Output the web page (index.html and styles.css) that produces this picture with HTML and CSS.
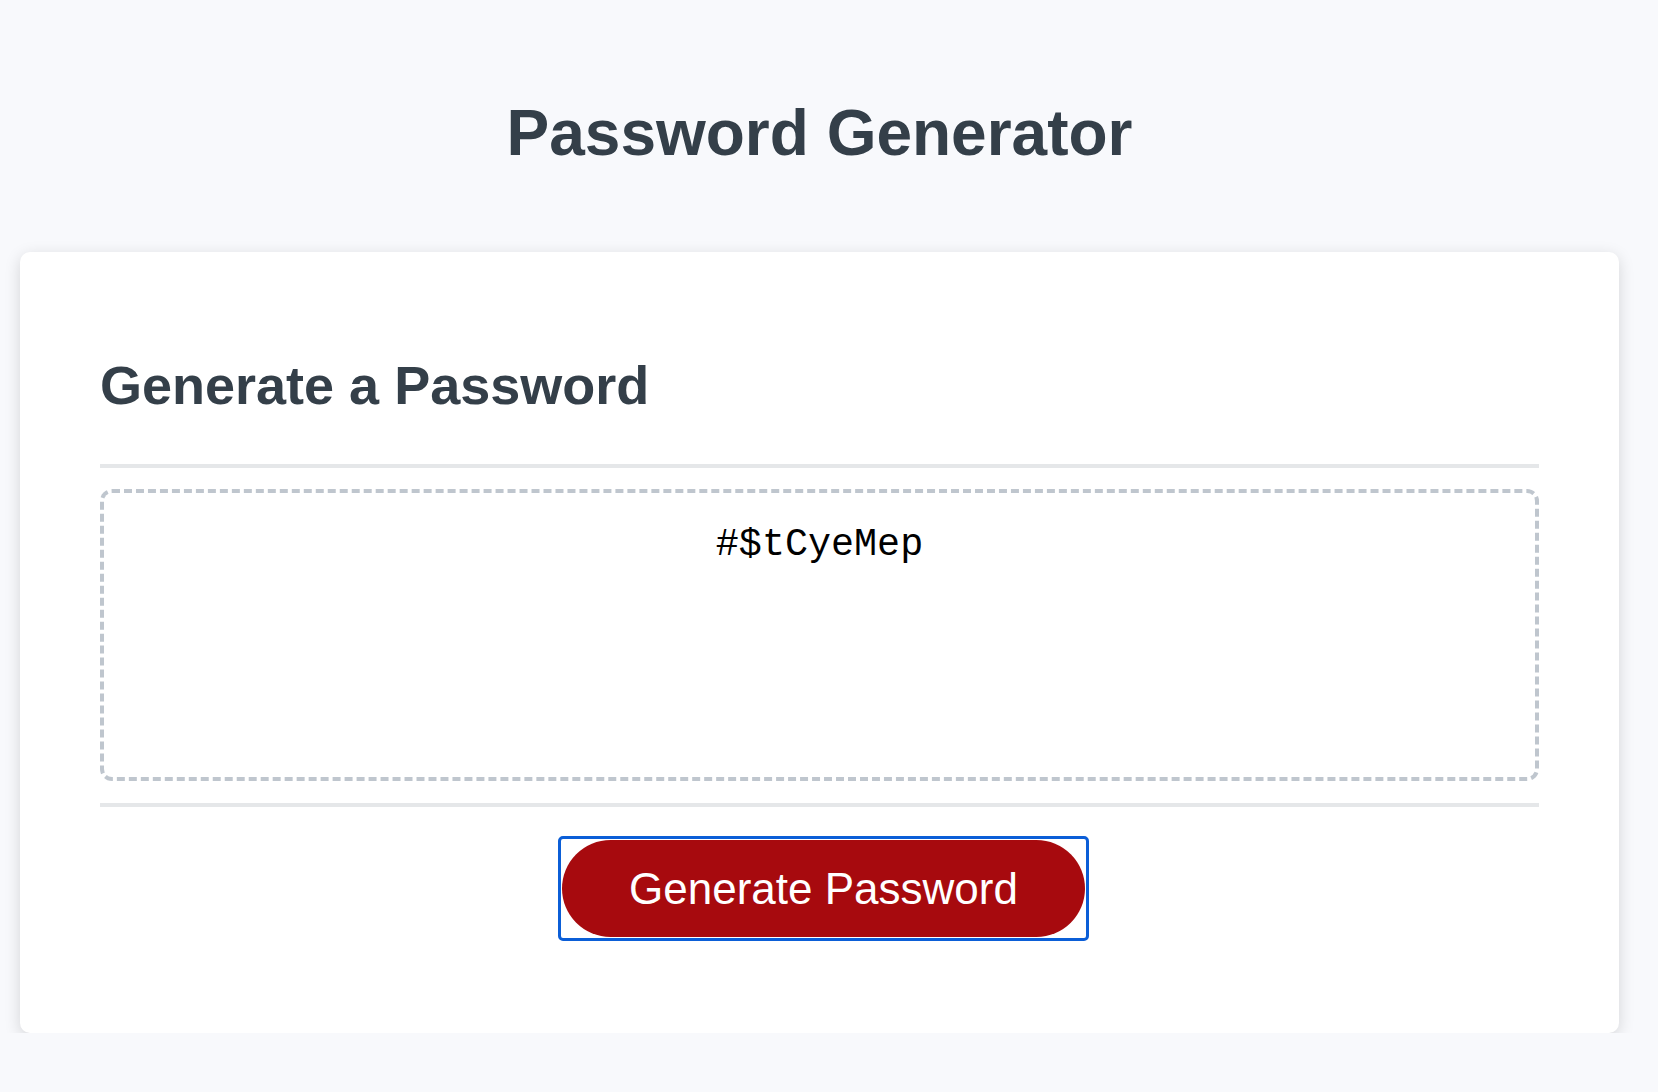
FILE: index.html
```html
<!DOCTYPE html>
<html lang="en">
<head>
<meta charset="UTF-8">
<title>Password Generator</title>
<link rel="stylesheet" href="styles.css">
</head>
<body>
<div class="wrapper">
  <header class="page-header">
    <h1 class="page-title">Password Generator</h1>
  </header>
  <div class="card">
    <div class="card-header">
      <h2 class="card-title">Generate a Password</h2>
    </div>
    <div class="card-body">
      <textarea readonly class="password" aria-label="Generated Password">#$tCyeMep</textarea>
    </div>
    <div class="card-footer">
      <span class="focus-ring"><button class="btn">Generate Password</button></span>
    </div>
  </div>
</div>
</body>
</html>
```
FILE: styles.css
```css
html, body {
  margin: 0;
  padding: 0;
}
body {
  background-color: #f8f9fc;
  font-family: "Liberation Sans", Arial, sans-serif;
}
.wrapper {
  padding: 53px 39px 0 20px;
}
.page-header {
  text-align: center;
  padding: 0 40px 39px;
  color: #343f49;
}
.page-title {
  font-size: 64px;
  margin: 43px 0;
  font-weight: 700;
}
.card {
  background: #fff;
  border-radius: 10px;
  box-shadow: rgba(0, 0, 0, 0.15) 0 4px 16px 0;
  color: #343f49;
  font-size: 36px;
  padding: 60px 80px;
}
.card-title {
  font-size: 54px;
  margin: 42px 0 48px;
  font-weight: 700;
}
.card-header::after,
.card-footer::before {
  content: "";
  display: block;
  height: 4px;
  background: #e5e7e9;
}
.card-body {
  padding: 21px 0 22px;
}
.password {
  display: block;
  box-sizing: border-box;
  width: 100%;
  height: 292px;
  margin: 0;
  padding: 30px 30px 170px;
  border: 4px dashed #bfc6ce;
  border-radius: 12px;
  font-family: "Liberation Mono", "Courier New", monospace;
  font-size: 38.4px;
  text-align: center;
  color: #000;
  resize: none;
  overflow: hidden;
  outline: none;
  background: #fff;
}
.card-footer {
  text-align: center;
}
.focus-ring {
  display: inline-block;
  margin: 29px 0 32px 8px;
  border: 3px solid #0b5ed7;
  border-radius: 5px;
  padding: 1px;
  line-height: 0;
}
.btn {
  border: none;
  background: #a70a0e;
  color: #fff;
  border-radius: 50px;
  font-family: "Liberation Sans", Arial, sans-serif;
  font-size: 44px;
  line-height: 44px;
  padding: 27px 67px 26px;
  margin: 0;
  cursor: pointer;
}
```
